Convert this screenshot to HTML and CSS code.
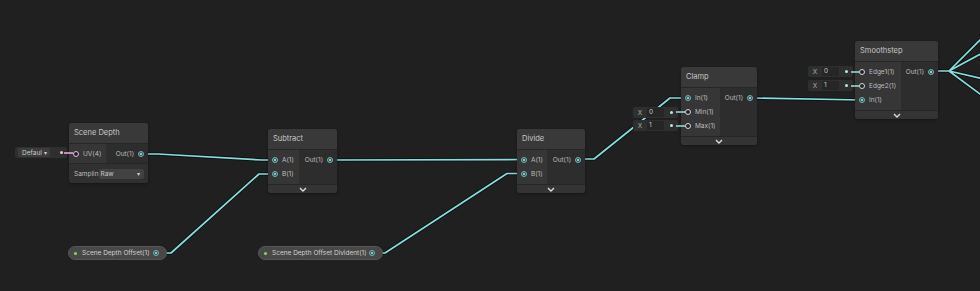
FILE: index.html
```html
<!DOCTYPE html>
<html lang="en">
<head>
  <meta charset="UTF-8" />
  <title>Shader Graph</title>
  <link rel="stylesheet" href="styles.css">
</head>
<body>
  <div id="graph">
    <!-- wires sit under the nodes -->
    <svg class="wires" width="980" height="291" viewBox="0 0 980 291">
      <g class="edge-shadow">
        <path d="M142 154 H158 L262 160 H276" />
        <path d="M156 253 H171 L259 174 H276" />
        <path d="M329 160 L523 159.5" />
        <path d="M371 253 H385 L507 173.5 H523" />
        <path d="M578 159 H594 L670 98 H688" />
        <path d="M750 98 L862 100" />
        <path d="M932 71 H949 L984 36 M949 71 L984 52 M949 71 L984 79 M949 71 L984 97" />
      </g>
      <g class="edge">
        <path d="M142 154 H158 L262 160 H276" />
        <path d="M156 253 H171 L259 174 H276" />
        <path d="M329 160 L523 159.5" />
        <path d="M371 253 H385 L507 173.5 H523" />
        <path d="M578 159 H594 L670 98 H688" />
        <path d="M750 98 L862 100" />
        <path d="M932 71 H949 L984 36 M949 71 L984 52 M949 71 L984 79 M949 71 L984 97" />
      </g>
    </svg>

    <!-- inline inputs -->
    <div class="inline-in in-uv">
      <span class="drop">Defaul <i>&#9662;</i></span>
      <span class="pin pin-pink"></span>
    </div>
    <div class="inline-in in-min">
      <span class="axis">X</span><span class="field">0</span><span class="pin"></span>
    </div>
    <div class="inline-in in-max">
      <span class="axis">X</span><span class="field">1</span><span class="pin"></span>
    </div>
    <div class="inline-in in-e1">
      <span class="axis">X</span><span class="field">0</span><span class="pin"></span>
    </div>
    <div class="inline-in in-e2">
      <span class="axis">X</span><span class="field">1</span><span class="pin"></span>
    </div>

    <!-- nodes -->
    <div class="node n-depth">
      <div class="node-title">Scene Depth</div>
      <div class="node-body">
        <div class="node-in">
          <div class="port"><span class="dot open pink"></span>UV(4)</div>
        </div>
        <div class="node-out">
          <div class="port out">Out(1)<span class="dot on"></span></div>
        </div>
      </div>
      <div class="node-opt">
        <span>Samplin</span>
        <span class="select">Raw <i>&#9662;</i></span>
      </div>
    </div>

    <div class="node n-subtract">
      <div class="node-title">Subtract</div>
      <div class="node-body">
        <div class="node-in">
          <div class="port"><span class="dot on"></span>A(1)</div>
          <div class="port"><span class="dot on"></span>B(1)</div>
        </div>
        <div class="node-out">
          <div class="port out">Out(1)<span class="dot on"></span></div>
        </div>
      </div>
      <div class="node-foot"><svg width="8" height="5" viewBox="0 0 8 5"><path d="M1 1 L4 4 L7 1" /></svg></div>
    </div>

    <div class="node n-divide">
      <div class="node-title">Divide</div>
      <div class="node-body">
        <div class="node-in">
          <div class="port"><span class="dot on"></span>A(1)</div>
          <div class="port"><span class="dot on"></span>B(1)</div>
        </div>
        <div class="node-out">
          <div class="port out">Out(1)<span class="dot on"></span></div>
        </div>
      </div>
      <div class="node-foot"><svg width="8" height="5" viewBox="0 0 8 5"><path d="M1 1 L4 4 L7 1" /></svg></div>
    </div>

    <div class="node n-clamp">
      <div class="node-title">Clamp</div>
      <div class="node-body">
        <div class="node-in">
          <div class="port"><span class="dot on"></span>In(1)</div>
          <div class="port"><span class="dot open"></span>Min(1)</div>
          <div class="port"><span class="dot open"></span>Max(1)</div>
        </div>
        <div class="node-out">
          <div class="port out">Out(1)<span class="dot on"></span></div>
        </div>
      </div>
      <div class="node-foot"><svg width="8" height="5" viewBox="0 0 8 5"><path d="M1 1 L4 4 L7 1" /></svg></div>
    </div>

    <div class="node n-smooth">
      <div class="node-title">Smoothstep</div>
      <div class="node-body">
        <div class="node-in">
          <div class="port"><span class="dot open"></span>Edge1(1)</div>
          <div class="port"><span class="dot open"></span>Edge2(1)</div>
          <div class="port"><span class="dot on"></span>In(1)</div>
        </div>
        <div class="node-out">
          <div class="port out">Out(1)<span class="dot on"></span></div>
        </div>
      </div>
      <div class="node-foot"><svg width="8" height="5" viewBox="0 0 8 5"><path d="M1 1 L4 4 L7 1" /></svg></div>
    </div>

    <!-- short stubs from inline fields run over the node edge -->
    <svg class="wires stubs" width="980" height="291" viewBox="0 0 980 291">
      <path class="stub" d="M676 112 H685 M676 126 H685 M851 72 H859 M851 86 H859" />
      <path class="stub-vec" d="M64 153 H73" />
    </svg>

    <!-- properties -->
    <div class="prop p-offset">
      <span class="prop-mark"></span>
      <span class="prop-name">Scene Depth Offset(1)</span>
      <span class="dot on"></span>
    </div>
    <div class="prop p-divident">
      <span class="prop-mark"></span>
      <span class="prop-name">Scene Depth Offset Divident(1)</span>
      <span class="dot on"></span>
    </div>
  </div>
</body>
</html>
```

FILE: styles.css
```css
* {
  margin: 0;
  padding: 0;
  box-sizing: border-box;
}

body, html {
  width: 100%;
  height: 100%;
  background-color: #202020;
  font-family: Inter, "Noto Sans", sans-serif;
  color: #c4c4c4;
}

#graph {
  position: relative;
  width: 980px;
  height: 291px;
  overflow: hidden;
}

.wires {
  position: absolute;
  top: 0;
  left: 0;
}
.wires path {
  fill: none;
  stroke-linejoin: round;
}
.edge-shadow path {
  stroke: #101010;
  stroke-width: 3.6;
}
.edge path {
  stroke: #84dede;
  stroke-width: 1.7;
}
.stubs {
  pointer-events: none;
}
.stubs .stub {
  stroke: #9fdede;
  stroke-width: 1.6;
}
.stubs .stub-vec {
  stroke: #e7a3e3;
  stroke-width: 1.6;
}

/* nodes */
.node {
  position: absolute;
  background-color: #2e2e2e;
  border-radius: 3px;
  overflow: hidden;
  box-shadow: 0 1px 3px rgba(0,0,0,0.35);
}
.node-title {
  height: 20px;
  line-height: 20px;
  padding-left: 5px;
  font-size: 7.5px;
  color: #c8c8c8;
  background-color: #393939;
}
.node-body {
  display: flex;
  border-top: 1px solid #262626;
}
.node-in {
  background-color: #363636;
  padding: 3px 0 3px;
}
.node-out {
  flex: 1;
  background-color: #2d2d2d;
  padding: 3px 0 3px;
}
.port {
  height: 14px;
  display: flex;
  align-items: center;
  gap: 4px;
  padding-left: 4px;
  font-size: 6.5px;
  color: #bdbdbd;
  white-space: nowrap;
}
.port.out {
  justify-content: flex-end;
  padding-left: 0;
  padding-right: 4px;
}
.node-foot {
  height: 9px;
  background-color: #343434;
  border-top: 1px solid #262626;
  display: flex;
  justify-content: center;
  align-items: center;
}
.node-foot path {
  fill: none;
  stroke: #dcdcdc;
  stroke-width: 1.4;
}

.dot {
  width: 6px;
  height: 6px;
  flex: none;
  border-radius: 50%;
  border: 1px solid #6fb8b8;
  background-color: #3c4c4c;
  position: relative;
}
.dot.on::after {
  content: "";
  position: absolute;
  top: 1px;
  left: 1px;
  width: 2px;
  height: 2px;
  border-radius: 50%;
  background-color: #9ff0f0;
}
.dot.open {
  border-color: #d8d8d8;
  background-color: #232323;
}
.dot.open.pink {
  border-color: #e6b8e4;
}

.n-depth    { left: 69px;  top: 123px; width: 79px; }
.n-subtract { left: 268px; top: 129px; width: 69px; }
.n-divide   { left: 517px; top: 129px; width: 68px; }
.n-clamp    { left: 681px; top: 67px;  width: 76px; }
.n-smooth   { left: 855px; top: 41px;  width: 83px; }

.n-depth .node-in    { width: 37px; }
.n-subtract .node-in { width: 31px; }
.n-divide .node-in   { width: 30px; }
.n-clamp .node-in    { width: 39px; }
.n-smooth .node-in   { width: 46px; }

.n-depth .node-in,
.n-depth .node-out {
  padding: 3px 0 2px;
}

.node-opt {
  height: 20px;
  display: flex;
  align-items: center;
  gap: 1px;
  padding-left: 5px;
  font-size: 6.5px;
  color: #bdbdbd;
  background-color: #303030;
  border-top: 1px solid #262626;
}
.select {
  width: 45px;
  height: 10px;
  line-height: 10px;
  padding-left: 1px;
  background-color: #424242;
  border-radius: 2px;
  color: #c8c8c8;
  position: relative;
}
.select i,
.drop i {
  font-style: normal;
  font-size: 6px;
  color: #d0d0d0;
}
.select i {
  position: absolute;
  right: 4px;
  top: 0;
}

/* inline value fields beside unconnected ports */
.inline-in {
  position: absolute;
  height: 11px;
  display: flex;
  align-items: center;
  background-color: #2f2f2f;
  border-radius: 2px;
  font-size: 6.5px;
  color: #c8c8c8;
}
.axis {
  width: 14px;
  text-align: center;
  color: #a8a8a8;
}
.field {
  height: 9px;
  line-height: 9px;
  padding-left: 2px;
  background-color: #262626;
  border-radius: 1px;
}
.pin {
  width: 3px;
  height: 3px;
  border-radius: 50%;
  background-color: #b9e6e6;
  margin-left: auto;
  margin-right: 5px;
}
.pin-pink {
  background-color: #e9c3e6;
  margin-right: 4px;
}
.drop {
  height: 9px;
  line-height: 9px;
  margin-left: 3px;
  padding: 0 3px 0 4px;
  background-color: #3c3c3c;
  border-radius: 2px;
}

.in-uv  { left: 15px;  top: 147px; width: 52px; }
.in-min { left: 633px; top: 107px; width: 45px; }
.in-max { left: 633px; top: 120px; width: 45px; }
.in-e1  { left: 808px; top: 66px;  width: 45px; }
.in-e2  { left: 808px; top: 80px;  width: 45px; }
.in-min .field, .in-max .field { width: 17px; }
.in-e1 .field, .in-e2 .field   { width: 17px; }

/* blackboard properties */
.prop {
  position: absolute;
  top: 246px;
  height: 14px;
  display: flex;
  align-items: center;
  padding: 0 7px 0 5px;
  background-color: #484848;
  border: 1px solid #555;
  border-radius: 7px;
  font-size: 6.5px;
  color: #cfcfcf;
}
.prop-mark {
  width: 3px;
  height: 3px;
  border-radius: 50%;
  background-color: #93d35a;
  margin-right: 5px;
}
.prop-name {
  flex: 1;
  white-space: nowrap;
}
.p-offset   { left: 68px;  width: 99px; }
.p-divident { left: 258px; width: 125px; }
```
